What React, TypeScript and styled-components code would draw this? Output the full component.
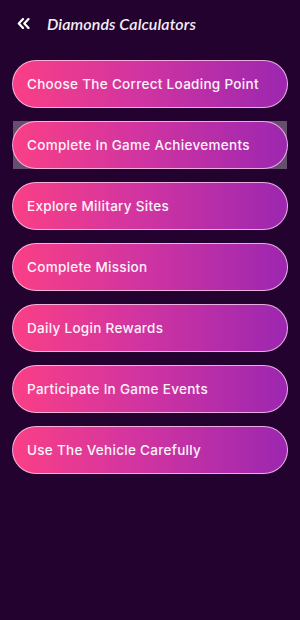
import React from 'react';
import styled, { createGlobalStyle } from 'styled-components';

const GlobalStyle = createGlobalStyle`
  html, body {
    margin: 0;
    padding: 0;
    background: #230230;
  }
  #root {
    min-height: 620px;
  }
`;

const Screen = styled.div`
  width: 300px;
  min-height: 620px;
  background: #230230;
  font-family: Inter, "Noto Sans", sans-serif;
`;

const Header = styled.header`
  display: flex;
  align-items: center;
  height: 47px;
  padding: 0 0 0 16px;
`;

const BackButton = styled.button`
  display: flex;
  align-items: center;
  justify-content: center;
  width: 14px;
  height: 14px;
  padding: 0;
  background: none;
  border: none;
  margin-right: 17px;
`;

const Title = styled.h1`
  margin: 0;
  color: #f4eef6;
  font-family: Lato, "Open Sans", sans-serif;
  font-style: italic;
  font-weight: 600;
  font-size: 16px;
  letter-spacing: 0.1px;
`;

const List = styled.div`
  display: flex;
  flex-direction: column;
  gap: 13px;
  padding: 13px 12px 0;
`;

const Slot = styled.div<{ $active?: boolean }>`
  background: ${(p) => (p.$active ? 'rgba(255, 255, 255, 0.3)' : 'transparent')};
  margin: 0 1px;
`;

const Item = styled.button`
  display: flex;
  align-items: center;
  width: 276px;
  height: 48px;
  margin: 0 -1px;
  padding: 0 14px;
  box-sizing: border-box;
  border-radius: 24px;
  border: 1px solid rgba(255, 215, 240, 0.75);
  background: linear-gradient(90deg, #fa3f86 0%, #d234a0 45%, #9c27b0 100%);
  color: #fdf3fa;
  font-family: Inter, "Noto Sans", sans-serif;
  font-size: 13.5px;
  font-weight: 500;
  letter-spacing: 0.3px;
  text-align: left;
  cursor: pointer;
`;

const items = [
  'Choose The Correct Loading Point',
  'Complete In Game Achievements',
  'Explore Military Sites',
  'Complete Mission',
  'Daily Login Rewards',
  'Participate In Game Events',
  'Use The Vehicle Carefully',
];

export default function App() {
  return (
    <>
      <GlobalStyle />
      <Screen>
        <Header>
          <BackButton aria-label="back">
            <svg width="13" height="11" viewBox="0 0 13 11" fill="none">
              <path d="M6 1L1.8 5.5L6 10" stroke="#fff" strokeWidth="2.2" strokeLinecap="round" strokeLinejoin="round" />
              <path d="M11.5 1L7.3 5.5L11.5 10" stroke="#fff" strokeWidth="2.2" strokeLinecap="round" strokeLinejoin="round" />
            </svg>
          </BackButton>
          <Title>Diamonds Calculators</Title>
        </Header>
        <List>
          {items.map((label, i) => (
            <Slot key={label} $active={i === 1}>
              <Item>{label}</Item>
            </Slot>
          ))}
        </List>
      </Screen>
    </>
  );
}
